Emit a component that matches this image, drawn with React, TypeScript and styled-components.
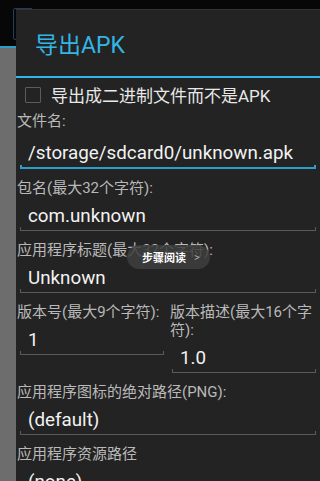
import styled, { createGlobalStyle, css } from "styled-components";

const GlobalStyle = createGlobalStyle`
  html, body {
    margin: 0;
    padding: 0;
    background: #000;
  }
  body {
    font-family: "Roboto", "Noto Sans CJK SC", sans-serif;
  }
`;

const Screen = styled.div`
  position: relative;
  width: 320px;
  height: 481px;
  overflow: hidden;
  display: flex;
  flex-direction: column;
  background: #0a0a0a;
`;

const ActionBar = styled.div`
  height: 48px;
  box-sizing: border-box;
  padding: 8px 0 0 13px;
  background: #070707;
  border-bottom: 2px solid #2a9cc8;
`;

const ActionButton = styled.div`
  width: 20px;
  height: 32px;
  box-sizing: border-box;
  border: 1px solid #1f3e62;
  border-radius: 2px;
`;

const Backdrop = styled.div`
  flex: 1;
  background: linear-gradient(to right, #6c6c6c, #7c7c7c 80%, #5a5a5a);
`;

const Dialog = styled.div`
  position: absolute;
  top: 9px;
  left: 16px;
  right: 0;
  bottom: 0;
  background: #232323;
  border-top: 1px solid #343434;
  overflow: hidden;
`;

const Title = styled.div`
  height: 66px;
  display: flex;
  align-items: center;
  padding-left: 19px;
  font-size: 23px;
  color: #33b5e5;
`;

const Divider = styled.div`
  height: 2px;
  background: #33b5e5;
`;

const CheckRow = styled.div`
  height: 32px;
  display: flex;
  align-items: center;
  padding-left: 9px;
`;

const CheckBox = styled.div`
  width: 16px;
  height: 16px;
  box-sizing: border-box;
  border: 1.5px solid #5c5c5c;
  border-radius: 1px;
  margin-top: 1px;
`;

const CheckLabel = styled.span`
  margin-left: 10px;
  font-size: 17px;
  color: #e8e8e8;
  white-space: nowrap;
`;

const Form = styled.div`
  padding-top: 2px;
`;

const Group = styled.div`
  margin-bottom: 10px;
`;

const Label = styled.div<{ $right?: boolean }>`
  font-size: 15px;
  line-height: 18px;
  color: #b9b9b9;
  padding-left: ${(p) => (p.$right ? 2 : 1)}px;
`;

const FieldText = styled.div<{ $focused?: boolean }>`
  padding: ${(p) => (p.$focused ? "12px 0 1px 12px" : "8px 0 0 12px")};
  font-size: 18.8px;
  line-height: 22px;
  color: #f2f2f2;
  white-space: nowrap;
`;

const Underline = styled.div<{ $focused?: boolean }>`
  height: 4px;
  margin: 0 4px;
  box-sizing: border-box;
  ${(p) =>
    p.$focused
      ? css`
          border: 2px solid #2b9dcf;
          border-top: none;
        `
      : css`
          border: 1px solid #5a5a5a;
          border-top: none;
        `}
`;

const Columns = styled.div`
  display: grid;
  grid-template-columns: 152px 152px;
  align-items: start;
`;

const Toast = styled.div`
  position: absolute;
  left: 127px;
  top: 245px;
  width: 83px;
  height: 24px;
  border-radius: 12px;
  background: rgba(62, 62, 62, 0.86);
  display: flex;
  align-items: center;
  padding-left: 15px;
  box-sizing: border-box;
  font-size: 11px;
  color: #fff;
  font-weight: 700;
  white-space: nowrap;
`;

const Chevron = styled.span`
  margin-left: 8px;
  color: #a8a8a8;
  font-weight: 400;
  font-size: 11px;
`;

type FieldProps = {
  label: string;
  value: string;
  focused?: boolean;
  right?: boolean;
};

const Field = ({ label, value, focused, right }: FieldProps) => (
  <Group>
    <Label $right={right}>{label}</Label>
    <FieldText $focused={focused}>{value}</FieldText>
    <Underline $focused={focused} />
  </Group>
);

const App = () => {
  return (
    <>
      <GlobalStyle />
      <Screen>
        <ActionBar>
          <ActionButton />
        </ActionBar>
        <Backdrop />
        <Dialog>
          <Title>导出APK</Title>
          <Divider />
          <CheckRow>
            <CheckBox />
            <CheckLabel>导出成二进制文件而不是APK</CheckLabel>
          </CheckRow>
          <Form>
            <Field
              label="文件名:"
              value="/storage/sdcard0/unknown.apk"
              focused
            />
            <Field label="包名(最大32个字符):" value="com.unknown" />
            <Field label="应用程序标题(最大32个字符):" value="Unknown" />
            <Columns>
              <Field label="版本号(最大9个字符):" value="1" />
              <Field label="版本描述(最大16个字符):" value="1.0" right />
            </Columns>
            <Field label="应用程序图标的绝对路径(PNG):" value="(default)" />
            <Field label="应用程序资源路径" value="(none)" />
          </Form>
        </Dialog>
        <Toast>
          步骤阅读<Chevron>&gt;</Chevron>
        </Toast>
      </Screen>
    </>
  );
};

export default App;
